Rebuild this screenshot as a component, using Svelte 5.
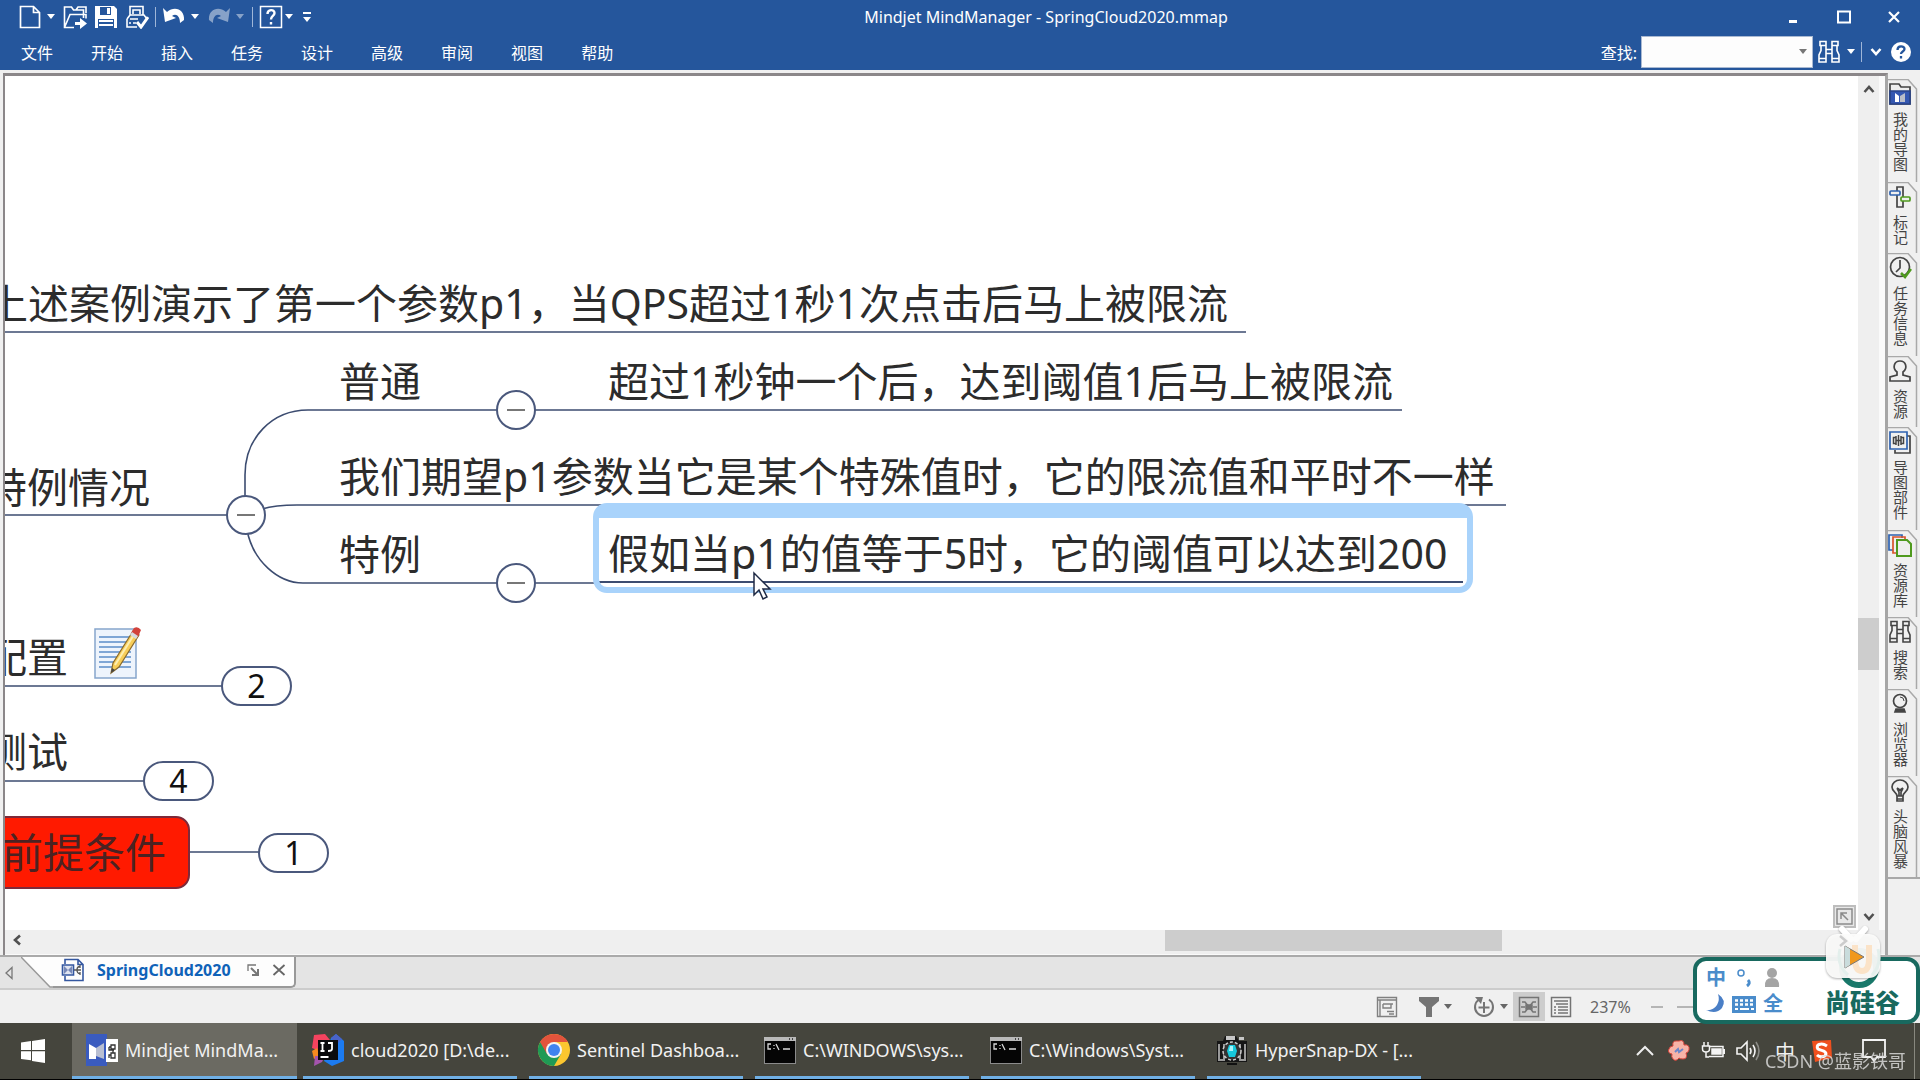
<script>
  const menus = ['文件', '开始', '插入', '任务', '设计', '高级', '审阅', '视图', '帮助'];

  const panels = [
    { label: '我的导图', icon: 'maps', size: 103 },
    { label: '标记', icon: 'marker', size: 71 },
    { label: '任务信息', icon: 'task', size: 103 },
    { label: '资源', icon: 'person', size: 71 },
    { label: '导图部件', icon: 'parts', size: 103 },
    { label: '资源库', icon: 'library', size: 87 },
    { label: '搜索', icon: 'search', size: 72 },
    { label: '浏览器', icon: 'browser', size: 87 },
    { label: '头脑风暴', icon: 'idea', size: 103 }
  ];

  const tasks = [
    { label: 'Mindjet MindMa...', icon: 'mindjet', active: true },
    { label: 'cloud2020 [D:\\de...', icon: 'idea' },
    { label: 'Sentinel Dashboa...', icon: 'chrome' },
    { label: 'C:\\WINDOWS\\sys...', icon: 'cmd' },
    { label: 'C:\\Windows\\Syst...', icon: 'cmd' },
    { label: 'HyperSnap-DX - [...', icon: 'camera' }
  ];

  // Scroll position of the viewport over the map surface.
  const scroll = { x: 5, y: 76 };

  // x: left edge of the text, y: vertical centre of the text
  const topics = [
    { text: '上述案例演示了第一个参数p1，当QPS超过1秒1次点击后马上被限流', x: -13, y: 303 },
    { text: '普通', x: 339, y: 381 },
    { text: '超过1秒钟一个后，达到阈值1后马上被限流', x: 608, y: 381 },
    { text: '特例情况', x: -14, y: 487 },
    { text: '我们期望p1参数当它是某个特殊值时，它的限流值和平时不一样', x: 339, y: 476 },
    { text: '特例', x: 339, y: 554 },
    { text: '假如当p1的值等于5时，它的阈值可以达到200', x: 608, y: 553 },
    { text: '配置', x: -14, y: 657 },
    { text: '测试', x: -14, y: 751 }
  ];

  const toggles = [
    { x: 516, y: 410 },
    { x: 246, y: 515 },
    { x: 516, y: 583 }
  ];

  const counts = [
    { n: 2, x: 256, y: 686 },
    { n: 4, x: 178, y: 781 },
    { n: 1, x: 293, y: 853 }
  ];

  const at = (p) => `left:${p.x - scroll.x}px;top:${p.y - scroll.y}px`;
</script>

{#snippet caret()}
  <svg class="caret" width="10" height="6" viewBox="0 0 10 6"><path d="M1 0h8L5 5z" fill="currentColor" /></svg>
{/snippet}

{#snippet binoculars()}
  <svg width="24" height="24" viewBox="0 0 24 24" fill="none" stroke="currentColor" stroke-width="1.6">
    <path d="M3 1.500h6v4H3zM15 1.500h6v4h-6zM4 5.500v5L2 15v7h7V5.500M15 5.500V22h7v-7l-2-4.500v-5M9 9.500h6v4H9M2 18.500h7M15 18.500h7" />
  </svg>
{/snippet}

{#snippet panelIcon(name)}
  {#if name === 'search'}
    {@render binoculars()}
  {:else}
    <svg width="24" height="24" viewBox="0 0 24 24" fill="none" stroke="#444" stroke-width="1.7">
      {#if name === 'maps'}
        <path d="M2 22V2h9l2 3h9v17z" fill="#eee" /><path d="M2 9h20v13H2z" fill="#3457b1" stroke="#2a4488" />
        <path d="M7 11l4 3v6H7z" fill="#fff" stroke="none" /><path d="M17 11l-5 3v6h5z" fill="#b9bdc9" stroke="none" />
      {:else if name === 'marker'}
        <path d="M9 2h6v20H9z" /><rect x="2" y="6" width="10" height="4" rx="1" fill="#eee" stroke="#2e62b0" />
        <rect x="13" y="12" width="9" height="4" rx="1" fill="#eee" stroke="#4f9a1e" />
      {:else if name === 'task'}
        <circle cx="12" cy="11" r="9.5" /><path d="M12 4v8l-4 4" /><path d="M13 17l4 4 6-8" stroke="#4f9a1e" stroke-width="2.6" />
      {:else if name === 'person'}
        <path d="M9 13C4 9 6 2 12 2s8 7 3 11v3l7 2v4H2v-4l7-2z" />
      {:else if name === 'parts'}
        <path d="M19 6h3v17H7v-3" /><path d="M2 2h17v17H2z" stroke="#2e62b0" />
        <path d="M10.500 5v11M8 7.500H5.500v6H8M13 7.500h2.500v6H13M8 6v9M13 6v9M8 10.500h5" stroke-width="1.500" />
      {:else if name === 'library'}
        <path d="M14 5V2H1v15h4" stroke="#2e62b0" /><path d="M17 7V4H5v16h4" stroke="#d9542b" />
        <path d="M9 7h10l4 4v12H9z" fill="#eee" stroke="#4f9a1e" stroke-width="2" />
      {:else if name === 'browser'}
        <circle cx="12" cy="9" r="6.500" /><path d="M12 5a4 4 0 0 1 4 4" stroke-width="1" /><path d="M8 17h8l1 3H7z" fill="#444" />
      {:else}
        <path d="M9 17c0-4-5-4-5-9a8 7 0 0 1 16 0c0 5-5 5-5 9zM9 17v5h6v-5M9 20h6M9 9l2 4v4M15 9l-2 4v4M9 9l3 2 3-2" />
      {/if}
    </svg>
  {/if}
{/snippet}

{#snippet taskIcon(name)}
  <svg width="34" height="34" viewBox="0 0 34 34">
    {#if name === 'mindjet'}
      <path d="M1 1h21v32H1z" fill="#3a5bbf" /><path d="M21 6h12v23H21z" fill="#fff" />
      <path d="M4 11l7 4v11H4z" fill="#fff" /><path d="M19 10l-8 5v8l8 3z" fill="#b9bfd2" />
      <path d="M26 12h4v4h-4zM26 20h4v5h-4zM24 14h2M24 14v3h5M28 16v4M26 22h-2v3" fill="none" stroke="#333" stroke-width="1.300" />
    {:else if name === 'idea'}
      <path d="M3 2l11-1 5 6-8 12-10-4z" fill="#f5435f" /><path d="M1 18l5-3 3 8-6 3z" fill="#f68b1f" />
      <path d="M4 23h10l-3 6-8 4z" fill="#a454ad" /><path d="M20 5l5-4 8 7v20l-12 5-8-5z" fill="#1c7bf0" />
      <path d="M20 5l5-4 6 5-6 6z" fill="#4a63c9" />
      <path d="M7 7h20v20H7z" fill="#0b0b0d" />
      <path d="M9.500 10h4M11.500 10v8M9.500 18h4M17 10h4v6q0 2-4 2M9.500 24h8" fill="none" stroke="#fff" stroke-width="1.800" />
    {:else if name === 'chrome'}
      <circle cx="17" cy="17" r="16" fill="#fbc62f" />
      <path d="M17 17L3.100 9A16 16 0 0 0 17 33l7-12z" fill="#1f9a55" />
      <path d="M3.100 9a16 16 0 0 1 27.800 0H17l-7 12z" fill="#e2533c" />
      <circle cx="17" cy="17" r="8" fill="#f3f3f3" /><circle cx="17" cy="17" r="6" fill="#3f83f0" />
    {:else if name === 'cmd'}
      <path d="M1 4h32v27H1z" fill="#8b8b8b" /><path d="M2 8h30v22H2z" fill="#050505" />
      <path d="M1 4h32v4H1z" fill="#b9b9b9" /><path d="M26 6h1M29 6h1" stroke="#444" stroke-width="2" />
      <path d="M8 11H5v5h3M11 12v1M11 15v1M13 11l3 6M20 16h7" fill="none" stroke="#d9d9d9" stroke-width="1.300" />
    {:else}
      <path d="M2 8h6l2-5h11l3 5h8v21H2z" fill="#161616" /><path d="M11 3h9v4h-9zM24 4h5v3h-5z" fill="#c6c6c6" />
      <path d="M4 11v16h5V11M30 11v16h-5V11" fill="none" stroke="#999" stroke-width="2" />
      <circle cx="17" cy="18" r="9" fill="#333" stroke="#ccc" stroke-width="1.500" stroke-dasharray="3 2" />
      <path d="M14 12h6l2 6-2 6h-6l-2-6z" fill="#17c9dc" /><path d="M15 13h3v5h-4z" fill="#a6f4fa" /><path d="M12 30h10v2H12z" fill="#111" />
    {/if}
  </svg>
{/snippet}

<div class="app">
  <header>
    <div class="titlebar">
      <div class="quick">
        <div class="pair">
          <button aria-label="New"><svg width="24" height="24" viewBox="0 0 24 24" fill="none" stroke="currentColor" stroke-width="1.700"><path d="M2.500 1.500h13l6 6v15h-19zM15.500 1.500v6h6" /></svg></button>
          <button class="drop" aria-label="New options">{@render caret()}</button>
        </div>
        <div class="files">
          <button aria-label="Open"><svg width="24" height="24" viewBox="0 0 24 24" fill="none" stroke="currentColor" stroke-width="1.600"><path d="M11 22.500H1.500V2h7l2 3h10v8M1.500 22.500L7 9.500h16v4M13 5l2-3h8v6" /><path d="M12 17h5v-4l7 5.500-7 5.500v-4h-5z" fill="currentColor" stroke="none" /></svg></button>
          <button aria-label="Save"><svg width="24" height="24" viewBox="0 0 24 24"><path d="M1 1h19l3 3v19H1z" fill="currentColor" /><path d="M6 2h11v8H6zM4 14h16v9H4z" fill="#25569c" /><path d="M13 3h3v6h-3zM5 15h14v2H5zM5 19h14v2H5z" fill="currentColor" /></svg></button>
          <button aria-label="Print"><svg width="24" height="24" viewBox="0 0 24 24" fill="none" stroke="currentColor" stroke-width="1.600"><path d="M5 10V1.500h13V10M8 9V5h7v4M2 14l3-4h14l3 4v1M2 14v8h10M5 14h8M4 18h2M8 18h3" /><path d="M12 17l4 5 7-10" stroke-width="3" /></svg></button>
        </div>
        <i class="sep"></i>
        <div class="pair">
          <button aria-label="Undo"><svg width="24" height="24" viewBox="0 0 24 24"><path d="M1 3l2 14 11-4-4-2c4-3 8 0 8 7l4-3C23 5 13 0 5 7z" fill="currentColor" /></svg></button>
          <button class="drop" aria-label="Undo list">{@render caret()}</button>
        </div>
        <div class="pair faded">
          <button aria-label="Redo"><svg width="24" height="24" viewBox="0 0 24 24"><path d="M23 3l-2 14-11-4 4-2c-4-3-8 0-8 7l-4-3C1 5 11 0 19 7z" fill="currentColor" /></svg></button>
          <button class="drop" aria-label="Redo list">{@render caret()}</button>
        </div>
        <i class="sep"></i>
        <div class="pair tight">
          <button aria-label="Help topics"><svg width="24" height="24" viewBox="0 0 24 24" fill="none" stroke="currentColor"><path d="M1.500 1.500h21v21h-21z" stroke-width="1.500" /><path d="M8.500 9c0-5 7-5 7-1 0 3-3.500 3-3.500 6.500M12 17v2.500" stroke-width="2.400" /></svg></button>
          <button class="drop" aria-label="Help options">{@render caret()}</button>
        </div>
        <button class="drop" aria-label="Customize toolbar"><svg width="10" height="12" viewBox="0 0 10 12" fill="currentColor"><path d="M1 1h8v2H1zM1 6h8l-4 5z" /></svg></button>
      </div>
      <h1>Mindjet MindManager - SpringCloud2020.mmap</h1>
      <div class="window">
        <button aria-label="Minimize"><svg width="16" height="16" viewBox="0 0 16 16"><path d="M3 11h8v3H3z" fill="#fff" /></svg></button>
        <button aria-label="Maximize"><svg width="16" height="16" viewBox="0 0 16 16"><path d="M2 2.500h12v11H2z" fill="none" stroke="#fff" stroke-width="2" /></svg></button>
        <button aria-label="Close"><svg width="16" height="16" viewBox="0 0 16 16"><path d="M3 3l10 10M13 3L3 13" stroke="#fff" stroke-width="2.200" /></svg></button>
      </div>
    </div>
    <div class="menubar">
      <nav>
        {#each menus as m}<button>{m}</button>{/each}
      </nav>
      <div class="find">
        <label for="find">查找:</label>
        <div class="combo">
          <input id="find" type="text" />
          <button aria-label="Recent searches">{@render caret()}</button>
        </div>
        <button aria-label="Search">{@render binoculars()}</button>
        <button class="drop" aria-label="Search options">{@render caret()}</button>
        <i class="sep"></i>
        <button class="fold" aria-label="Collapse ribbon"><svg width="12" height="10" viewBox="0 0 12 10"><path d="M1.500 2L6 7l4.500-5" fill="none" stroke="#fff" stroke-width="2.600" /></svg></button>
        <button aria-label="Help"><svg width="22" height="22" viewBox="0 0 22 22"><circle cx="11" cy="11" r="10" fill="#fff" /><path d="M7.500 9c0-5 7-4.500 7-1 0 2.500-3.500 2.500-3.500 5M11 15v2.500" fill="none" stroke="#25569c" stroke-width="2.300" /></svg></button>
      </div>
    </div>
  </header>

  <div class="work">
    <main>
      <div class="view">
        <div class="map">
          <div class="links">
            <svg width="100%" height="100%">
              <g transform="translate(-5 -76)" fill="none" stroke="#3c4c70" stroke-width="1.600">
                <path d="M0 332H1246M335 410H1402M297 505H1506M335 583H600M0 515H240M0 686H222M0 781H144M189 852H259" />
                <path d="M245 500V475C245 438 272 410 308 410H335M262 509Q275 505 297 505M247 530C253 561 278 583 303 583H335" />
              </g>
            </svg>
          </div>
          <div class="selection" style={at({ x: 593, y: 503 })}></div>
          <div class="boxed" style={at({ x: -18, y: 816 })}>前提条件</div>
          {#each topics as t}
            <div class="topic" style={at(t)}>{t.text}</div>
          {/each}
          {#each toggles as t}
            <button class="toggle" aria-label="Collapse topic" style={at(t)}></button>
          {/each}
          {#each counts as c}
            <button class="count" style={at(c)}>{c.n}</button>
          {/each}
          <svg class="note" style={at({ x: 93, y: 626 })} width="50" height="54" viewBox="0 0 50 54">
            <path d="M2 3h41v49H2z" fill="#eef4fc" stroke="#86a5cc" stroke-width="1.500" />
            <path d="M6 11h30M6 16h32M6 21h32M6 26h32M6 31h32M6 36h32M6 41h32" stroke="#5b8cc8" stroke-width="1.600" />
            <path d="M18 47l2-10L40 5l6 4-20 32z" fill="#f7cd58" stroke="#8a6a2c" stroke-width="1.200" />
            <path d="M22 39L42 7" stroke="#fdeeb0" stroke-width="2" /><path d="M18 47l1-5 3 2z" fill="#444" />
            <path d="M38 7l3-5q4-2 7 2l-3 7z" fill="#d2423b" /><path d="M37 9l2-3 6 4-2 3z" fill="#d7d9de" />
          </svg>
          <svg class="pointer" style={at({ x: 752, y: 571 })} width="20" height="30" viewBox="0 0 20 30">
            <path d="M2 2v22l5-5 4 9 4-2-4-8h7z" fill="#fff" stroke="#1f2a44" stroke-width="1.500" />
          </svg>
          <button class="fit" aria-label="Fit map"><svg width="17" height="17" viewBox="0 0 17 17" fill="none" stroke="#8a8a8a" stroke-width="1.500"><path d="M1 1h15v15H1zM5 11V5h6M5 5l7 7" /></svg></button>
        </div>
        <div class="vbar">
          <svg width="12" height="10" viewBox="0 0 12 10"><path d="M1.500 8L6 3l4.500 5" fill="none" stroke="#505050" stroke-width="2.600" /></svg>
          <div class="vthumb"></div>
          <svg width="12" height="10" viewBox="0 0 12 10"><path d="M1.500 2L6 7l4.500-5" fill="none" stroke="#505050" stroke-width="2.600" /></svg>
        </div>
      </div>
      <div class="hbar">
        <svg width="10" height="12" viewBox="0 0 10 12"><path d="M8 1.500L3 6l5 4.500" fill="none" stroke="#505050" stroke-width="2.600" /></svg>
        <div class="hthumb"></div>
      </div>
    </main>
    <aside>
      {#each panels as p}
        <button class="panel" style="height:{p.size}px">
          <svg class="edge" width="32" height="100%"><path d="M0 .500H20L28.500 10V200" fill="#f0f0f0" stroke="#a9a9a9" stroke-width="1.500" /></svg>
          {@render panelIcon(p.icon)}
          <span>{p.label}</span>
        </button>
      {/each}
    </aside>
  </div>

  <div class="tabs">
    <button class="prev" aria-label="Previous tab"><svg width="10" height="14" viewBox="0 0 10 14"><path d="M8 1.500v11L2 7z" fill="none" stroke="#777" stroke-width="1.300" /></svg></button>
    <div class="tab">
      <svg class="slant" width="32" height="31" viewBox="0 0 32 31"><path d="M0 0l29 30h3V0z" fill="#fdfdfd" /><path d="M0 0l29 30h3" fill="none" stroke="#999" stroke-width="1.500" /></svg>
      <div class="tabbody">
        <svg width="24" height="24" viewBox="0 0 24 24" fill="none" stroke="#3457a0" stroke-width="1.600"><path d="M4 6V1.500h13l5 5v16H4V18M17 1.500v5h5" /><path d="M1.500 7h11v10h-11z" fill="#dfe4f0" /><path d="M3 8l4 4-4 4zM11 8l-4 4 4 4z" fill="#7788b8" stroke="none" /><path d="M13 12h3M19 8.500q-3 0-3 3.500t3 3.500M16 12h4M19 7v3M19 14v3" stroke="#555" stroke-width="1.300" /></svg>
        <a href="#map">SpringCloud2020</a>
        <button aria-label="Float window"><svg width="14" height="14" viewBox="0 0 14 14" fill="none" stroke="#777" stroke-width="1.300"><path d="M2 8V2h8" /><path d="M5 5l6 6M12 6v6H6" stroke-width="2" /></svg></button>
        <button aria-label="Close tab"><svg width="14" height="14" viewBox="0 0 14 14"><path d="M1.500 2l11 10M12.500 2l-11 10" stroke="#666" stroke-width="1.800" /></svg></button>
      </div>
    </div>
  </div>

  <div class="status">
    <button class="st" aria-label="Notes"><svg width="22" height="22" viewBox="0 0 22 22" fill="none" stroke="#808080" stroke-width="1.400"><path d="M1.500 1.500h19v19h-19zM1.500 4h19M4 4v16" /><path d="M7 8h10M7 8v4h8V8M11 15.500h7M13 18h5" /></svg></button>
    <button class="st menu" aria-label="Filter"><svg width="22" height="22" viewBox="0 0 22 22"><path d="M1 1h20v4l-7 6v10H8V11L1 5z" fill="#747474" /></svg>{@render caret()}</button>
    <button class="st menu" aria-label="Focus"><svg width="24" height="22" viewBox="0 0 24 22" fill="none" stroke="#747474" stroke-width="2"><path d="M7 3.500a9 9 0 1 0 10 0M12 6v11M6.500 11.500h11" /><path d="M3 1h8l-2 7z" fill="#747474" stroke="none" /></svg>{@render caret()}</button>
    <button class="st on" aria-label="Map view"><svg width="22" height="22" viewBox="0 0 22 22" fill="none" stroke="#747474" stroke-width="1.500"><path d="M1.500 1.500h19v19h-19zM4 6h3l4 5 4-5h3M4 16h3l4-5 4 5h3M3 11h4M15 11h4" /><path d="M8 9h6v4H8z" fill="#747474" /></svg></button>
    <button class="st" aria-label="Outline view"><svg width="22" height="22" viewBox="0 0 22 22" fill="none" stroke="#747474" stroke-width="1.500"><path d="M1.500 1.500h19v19h-19zM4 5h14M6 8h12M8 11h10M8 14h10M8 17h10M4 11h2M4 14h2M4 17h2" /></svg></button>
    <span class="zoom">237%</span>
    <i class="minus"></i><i class="track"></i>
  </div>

  <footer>
    <button class="start" aria-label="Start"><svg width="24" height="24" viewBox="0 0 24 24" fill="#fff"><path d="M0 3.500l10-1.400V11H0zM11 2l13-2v11H11zM0 12.300h10v9L0 20zM11 12.300h13V24l-13-2z" /></svg></button>
    {#each tasks as t}
      <button class="task" class:active={t.active}>
        {@render taskIcon(t.icon)}
        <span>{t.label}</span>
      </button>
    {/each}
    <div class="tray">
      <svg class="more" width="20" height="12" viewBox="0 0 20 12"><path d="M2 10l8-8 8 8" fill="none" stroke="#eee" stroke-width="2" /></svg>
      <svg width="24" height="24" viewBox="0 0 24 24"><path d="M12 2q5-2 5 4 6-1 5 5-1 3-3 3 2 6-3 6-3 0-4-1-3 4-6 1-2-2-1-5-5-1-3-5 1-3 4-3-1-5 3-5z" fill="#f7b3a8" stroke="#d9443c" stroke-width="1" /><path d="M8 13l3-3 1 3 4-3" fill="none" stroke="#6c86c9" stroke-width="2" /></svg>
      <svg width="24" height="24" viewBox="0 0 24 24" fill="none" stroke="#f4f4f4" stroke-width="1.500"><path d="M9 7.500h13v10H8M23.500 10v5M3 3v4M7 3v4M1.500 7h7v3q0 3-3.500 3T1.500 10zM5 13v5h3" /><path d="M11 10h9v5h-9z" fill="#f4f4f4" /></svg>
      <svg width="26" height="24" viewBox="0 0 26 24" fill="none" stroke="#f4f4f4" stroke-width="1.600"><path d="M2 9h4l6-6v18l-6-6H2zM15 9q2 3 0 6M18 6q4 6 0 12" /><path d="M21 3q6 9 0 18" opacity=".4" /></svg>
      <span class="lang">中</span>
      <svg width="24" height="24" viewBox="0 0 24 24"><path d="M3 2l19-1 1 18-17 4z" fill="#f0501e" /><path d="M18 7c-6-4-12-1-9 3 3 2 8 1 8 5-1 4-7 3-9 1" fill="none" stroke="#fff" stroke-width="3" /></svg>
      <svg class="notice" width="24" height="26" viewBox="0 0 24 26" fill="none" stroke="#f4f4f4" stroke-width="1.800"><path d="M1 2h22v17H15l-3 4-3-4H1z" /></svg>
      <i class="desk"></i>
    </div>
    <p class="credit">CSDN @蓝影铁哥</p>
  </footer>

  <div class="ime">
    <div class="keys">
      <b>中</b>
      <svg width="22" height="22" viewBox="0 0 22 22" fill="none" stroke="#4a8ccb"><circle cx="8" cy="6" r="3" stroke-width="1.500" /><path d="M15 13q3 3-1 6" stroke-width="3" /></svg>
      <svg width="22" height="22" viewBox="0 0 22 22" fill="#a4a4a4"><circle cx="10" cy="6" r="5" /><path d="M3 20q-1-9 7-9t7 9z" /></svg>
      <svg width="22" height="22" viewBox="0 0 22 22"><path d="M13 1q9 6 4 14-6 7-16 2 7 1 11-5 3-5 1-11z" fill="#4a7fc6" /></svg>
      <svg width="26" height="22" viewBox="0 0 26 22"><path d="M1 3h24v17H1z" fill="#4a8ccb" /><path d="M4 7.500h18M4 11.500h18" stroke="#fff" stroke-width="2.400" stroke-dasharray="3 2" /><path d="M4 16h3M9 16h9M20 16h3" stroke="#fff" stroke-width="2" /></svg>
      <b>全</b>
    </div>
    <div class="brand">尚硅谷</div>
    <svg class="tv" width="58" height="72" viewBox="0 0 58 72">
      <circle cx="35" cy="43" r="17" fill="#fff" stroke="#18786a" stroke-width="6" />
      <g filter="drop-shadow(0 1px 1px #0005)">
        <path d="M18 4l9 10M41 4l-9 10" stroke="#fff" stroke-width="6" stroke-linecap="round" />
        <rect x="2" y="9" width="54" height="44" rx="11" fill="#fcfcfb" fill-opacity=".94" />
      </g>
      <path d="M16 24q-4 16 8 26M54 24q4 16-6 26" fill="none" stroke="#e3efec" stroke-width="3" />
      <path d="M31 20v14q0 12 7 12t7-12V20" fill="none" stroke="#fbe3c8" stroke-width="6" />
      <path d="M16 11l6 5-6 5" fill="none" stroke="#ccc" stroke-width="2.500" />
      <path d="M21 21l19 11-19 11z" fill="#f0981e" stroke="#777" stroke-width="1" /><path d="M21 21l5 3v16l-5 3z" fill="#c9dcdc" />
    </svg>
  </div>
</div>

<style>
  :global(body) { margin: 0; }
  .app {
    position: relative;
    display: flex;
    flex-direction: column;
    min-height: 100vh;
    overflow: hidden;
    background: #f0f0f0;
    font-family: 'Noto Sans', 'Noto Sans CJK SC', sans-serif;
    font-size: 16px;
    color: #333;
  }
  button {
    display: flex;
    align-items: center;
    justify-content: center;
    padding: 0;
    border: 0;
    background: none;
    color: inherit;
    font: inherit;
  }
  svg { display: block; flex: none; }
  header { background: #25569c; color: #fff; }
  .titlebar { display: grid; grid-template-columns: 1fr auto 1fr; align-items: center; height: 34px; }
  .quick { display: flex; align-items: center; gap: 6px; padding-left: 18px; height: 30px; }
  .pair { display: flex; align-items: center; gap: 3px; }
  .tight { gap: 0; }
  .files { display: flex; gap: 7px; }
  .faded { opacity: .45; }
  .drop { width: 12px; }
  .sep { width: 1px; height: 20px; background: #9fb6d8; }
  h1 { margin: 0; padding-left: 172px; font-size: 16px; line-height: 20px; font-weight: 400; white-space: nowrap; }
  .window { display: flex; justify-content: flex-end; gap: 34px; padding-right: 18px; }
  .menubar { display: flex; justify-content: space-between; align-items: center; height: 36px; }
  nav { display: flex; padding: 1px 0 0 2px; }
  nav button { padding: 0 19px; line-height: 24px; }
  .find { display: flex; align-items: center; gap: 4px; padding-right: 8px; }
  .combo { position: relative; display: flex; color: #777; }
  .combo input { width: 172px; height: 32px; box-sizing: border-box; border: 1px solid #a9b9d2; background: #fdfdfd; font: inherit; }
  .combo button { position: absolute; right: 5px; top: 0; height: 32px; }
  .fold { width: 20px; }

  .work { display: flex; flex: 1; }
  main {
    flex: 1;
    display: flex;
    flex-direction: column;
    min-width: 0;
    box-sizing: border-box;
    margin: 3px 0 0 3px;
    border: solid #8b8789;
    border-width: 3px 3px 0 2px;
    border-right-color: #a6a6a6;
    background: #efefef;
  }
  .view { flex: 1; display: flex; }
  .map { position: relative; flex: 1; overflow: hidden; background: #fff; }
  .links { position: absolute; inset: 0; }
  .topic, .boxed { font-size: 41px; line-height: 48px; white-space: nowrap; color: #2c2c2c; }
  .topic { position: absolute; transform: translateY(-50%); }
  .selection {
    position: absolute;
    box-sizing: border-box;
    width: 880px;
    height: 90px;
    border: 6px solid #a9d3fb;
    border-top-width: 15px;
    border-radius: 14px;
    background: linear-gradient(#3c4c70, #3c4c70) 0 63px / 864px 2px no-repeat #fff;
  }
  .boxed {
    position: absolute;
    box-sizing: border-box;
    height: 73px;
    width: 208px;
    padding: 10px 18px;
    border: 2px solid #7d2a3a;
    border-radius: 14px;
    background: #ff1a00;
    color: #4c2222;
  }
  .toggle {
    position: absolute;
    width: 40px;
    height: 40px;
    margin: -20px 0 0 -20px;
    border: 2px solid #4a587c;
    border-radius: 50%;
    background: #fff;
  }
  .toggle::before { content: ''; width: 18px; height: 2px; background: #777; }
  .count {
    position: absolute;
    width: 71px;
    height: 40px;
    margin: -20px 0 0 -35px;
    border: 2px solid #4a587c;
    border-radius: 20px;
    background: #fff;
    color: #111;
    font-size: 32px;
    line-height: 36px;
  }
  .note, .pointer { position: absolute; }
  .fit { position: absolute; right: 2px; bottom: 2px; width: 23px; height: 23px; background: #e8e8e8; border: 2px solid #bdbdbd; }
  .vbar { display: flex; flex-direction: column; align-items: center; justify-content: space-between; width: 21px; padding: 8px 6px 8px 0; background: linear-gradient(90deg, #efefef 21px, #fafafa 21px); }
  .vthumb { width: 21px; height: 52px; margin-top: 282px; background: #cdcdcd; }
  .hbar { display: flex; align-items: flex-start; height: 24px; padding-left: 7px; border-bottom: 1px solid #fafafa; }
  .hbar svg { padding-top: 4px; }
  .hthumb { width: 18%; height: 21px; margin-left: 61%; background: #cdcdcd; }

  aside { display: flex; flex-direction: column; width: 32px; padding-top: 9px; }
  .panel { position: relative; flex-direction: column; justify-content: flex-start; width: 32px; padding: 3px 8px 0 0; box-sizing: border-box; color: #444; gap: 6px; }
  .panel > :global(svg) { position: relative; }
  .panel .edge { position: absolute; left: 0; top: 0; }
  .panel:last-child { border-bottom: 2px solid #a9a9a9; }
  .panel span { position: relative; writing-mode: vertical-rl; text-orientation: upright; font-size: 15px; line-height: 20px; }

  .tabs { display: flex; align-items: stretch; height: 35px; box-sizing: border-box; border-top: 2px solid #aaa; border-bottom: 2px solid #ccc; background: #e4e4e4; }
  .prev { width: 18px; margin-right: 3px; }
  .tab { display: flex; height: 31px; }
  .tabbody { display: flex; align-items: center; gap: 12px; padding: 0 8px 3px; box-sizing: border-box; border: solid #999; border-width: 0 2px 2px 0; border-radius: 0 0 5px 0; background: #fdfdfd; }
  .tabbody a { padding-right: 3px; color: #0f62b8; font-weight: 700; text-decoration: none; }

  .status { display: flex; align-items: center; height: 33px; padding-left: 1371px; color: #666; }
  .st { width: 32px; height: 29px; }
  .menu { width: 46px; gap: 3px; }
  .st + .menu { margin-left: 9px; }
  .on { background: #cdcdcd; }
  .zoom { padding: 0 20px 0 13px; line-height: 24px; }
  .minus, .track { width: 12px; height: 2px; background: #b5b5b5; }
  .track { width: 40px; margin-left: 14px; }

  footer { position: relative; display: flex; height: 57px; box-sizing: border-box; border-bottom: 1px solid #000; background: #45453d; color: #f1f1f1; }
  .start { width: 66px; }
  .task { width: 214px; box-sizing: border-box; justify-content: flex-start; margin-left: 12px; padding: 0 0 0 8px; gap: 6px; border-bottom: 3px solid #70b0e6; font-size: 18px; white-space: nowrap; }
  .task.active { width: 225px; margin: 0 -6px 0 6px; padding-left: 13px; background: #6b6a62; }
  .tray { display: flex; align-items: center; margin-left: auto; gap: 10px; }
  .more { margin-right: 2px; }
  .lang { width: 28px; text-align: center; font-size: 20px; }
  .notice { margin-left: 19px; }
  .desk { width: 1px; height: 56px; margin: 0 5px 0 18px; background: #88887f; }
  .credit { position: absolute; right: 14px; bottom: 4px; margin: 0; font-size: 18px; line-height: 28px; color: #d8d8d8; opacity: .85; }

  .ime { position: absolute; right: 0; bottom: 56px; display: flex; box-sizing: border-box; width: 227px; height: 67px; padding: 4px 16px 4px 6px; justify-content: space-between; border: 4px solid #18695f; border-radius: 13px; background: #fff; }
  .keys { display: grid; grid-template-columns: 26px 30px 28px; grid-auto-rows: 26px; align-items: center; justify-items: center; color: #4a8ccb; font-size: 20px; line-height: 24px; }
  .brand { align-self: flex-end; color: #18695f; font-size: 25px; line-height: 28px; font-weight: 900; }
  .tv { position: absolute; right: 34px; top: -36px; }
</style>
